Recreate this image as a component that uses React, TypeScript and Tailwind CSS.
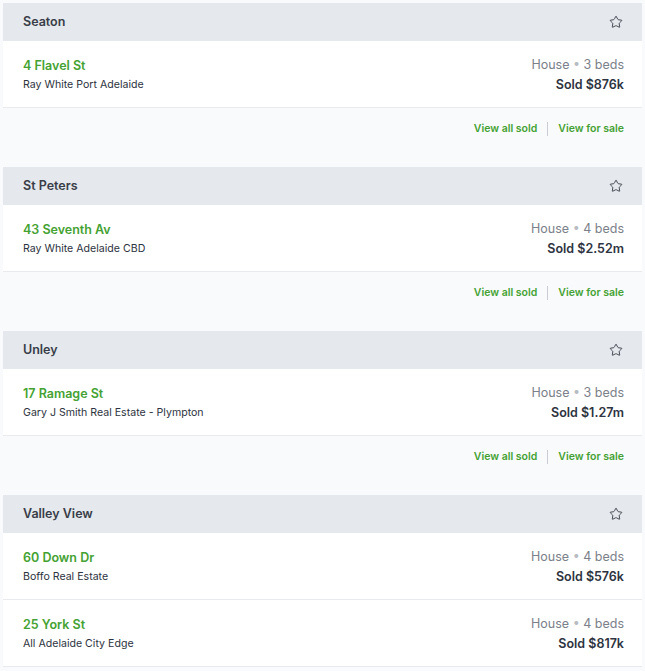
import { Star } from "lucide-react";

interface Sale {
  address: string;
  agency: string;
  beds: number;
  price: string;
}

interface Suburb {
  name: string;
  sales: Sale[];
  links: boolean;
}

const suburbs: Suburb[] = [
  { name: "Seaton", links: true, sales: [{ address: "4 Flavel St", agency: "Ray White Port Adelaide", beds: 3, price: "$876k" }] },
  { name: "St Peters", links: true, sales: [{ address: "43 Seventh Av", agency: "Ray White Adelaide CBD", beds: 4, price: "$2.52m" }] },
  { name: "Unley", links: true, sales: [{ address: "17 Ramage St", agency: "Gary J Smith Real Estate - Plympton", beds: 3, price: "$1.27m" }] },
  {
    name: "Valley View",
    links: false,
    sales: [
      { address: "60 Down Dr", agency: "Boffo Real Estate", beds: 4, price: "$576k" },
      { address: "25 York St", agency: "All Adelaide City Edge", beds: 4, price: "$817k" },
    ],
  },
];

function SaleRow({ sale }: { sale: Sale }) {
  return (
    <div className="flex h-[67px] items-center justify-between border-b border-[#e8eaee] bg-white pl-5 pr-[18px]">
      <div className="flex flex-col gap-[3px]">
        <span className="text-[12.5px] font-semibold leading-[17px] text-[#44a232]">{sale.address}</span>
        <span className="text-[10.6px] leading-[15px] text-[#2d3340]">{sale.agency}</span>
      </div>
      <div className="flex flex-col items-end gap-[3px]">
        <span className="text-[12.5px] leading-[17px] text-[#7b8089]">
          House <span className="text-[#b8bcc3]">•</span> {sale.beds} beds
        </span>
        <span className="text-[12.5px] font-semibold leading-[17px] text-[#2d3340]">
          Sold {sale.price}
        </span>
      </div>
    </div>
  );
}

function SuburbCard({ suburb }: { suburb: Suburb }) {
  return (
    <section>
      <div className="flex h-[38px] items-center justify-between bg-[#e5e8ec] pl-5 pr-[19px]">
        <h3 className="text-[12.5px] font-semibold text-[#383d48]">{suburb.name}</h3>
        <Star className="h-[14px] w-[14px] text-[#3a3f4a]" strokeWidth={1.6} />
      </div>
      {suburb.sales.map((s) => (
        <SaleRow key={s.address} sale={s} />
      ))}
      {suburb.links && (
        <div className="flex h-[59px] items-start justify-end pl-5 pr-[18px] pt-[13px]">
          <div className="flex items-center text-[10.5px] font-semibold text-[#44a232]">
            <span>View all sold</span>
            <span className="mx-[10px] h-[14px] w-px bg-[#c9cdd3]" />
            <span>View for sale</span>
          </div>
        </div>
      )}
    </section>
  );
}

export default function App() {
  return (
    <div className="min-h-screen bg-[#f9fafc] px-[3px] pt-[3px]" style={{ fontFamily: "Inter, 'Noto Sans', sans-serif" }}>
      <div className="flex flex-col">
        {suburbs.map((s) => (
          <SuburbCard key={s.name} suburb={s} />
        ))}
      </div>
    </div>
  );
}
